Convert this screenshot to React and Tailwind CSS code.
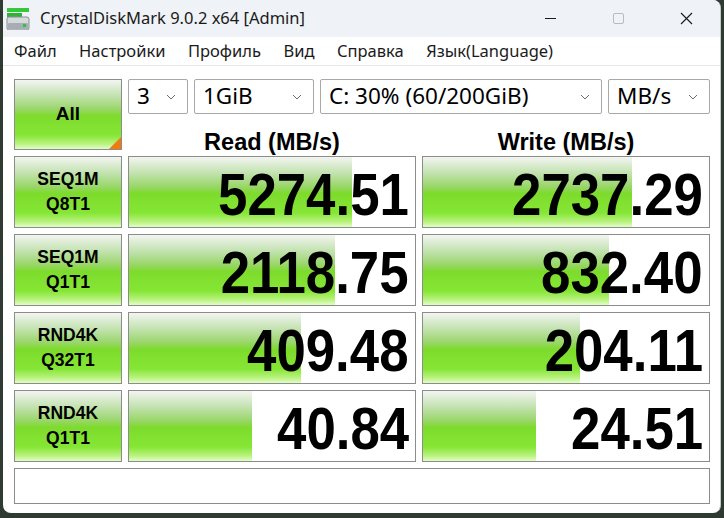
import React from 'react';

const rows = [
  { a: 'SEQ1M', b: 'Q8T1', read: '5274.51', readPct: 78, write: '2737.29', writePct: 73 },
  { a: 'SEQ1M', b: 'Q1T1', read: '2118.75', readPct: 72, write: '832.40', writePct: 65 },
  { a: 'RND4K', b: 'Q32T1', read: '409.48', readPct: 60, write: '204.11', writePct: 55 },
  { a: 'RND4K', b: 'Q1T1', read: '40.84', readPct: 43, write: '24.51', writePct: 39.5 },
];

const green =
  'bg-[linear-gradient(to_bottom,#f3f5f1_0%,#c4e3b2_22%,#9ad66a_42%,#7ddb2c_52%,#86e636_80%,#b7f27c_92%,#e2fcc8_100%)]';

const ui = { fontFamily: '"Noto Sans", "Open Sans", sans-serif' };
const bold = { fontFamily: '"Liberation Sans", Arial, sans-serif' };

const Chevron = () => (
  <svg width="12" height="8" viewBox="0 0 12 8" className="shrink-0">
    <path d="M2 2 L6 6 L10 2" fill="none" stroke="#6b6b6b" strokeWidth="1" />
  </svg>
);

const Select = ({ value, className }) => (
  <div
    className={`h-[35px] flex items-center justify-between pl-[8px] pr-[10px] bg-white border border-[#a8a8a8] rounded-[2px] ${className}`}
  >
    <span className="text-[22.5px] text-black leading-none" style={ui}>{value}</span>
    <Chevron />
  </div>
);

const ResultCell = ({ value, pct }) => (
  <div className="relative h-[72px] border border-[#8c8c8c] bg-white overflow-hidden">
    <div className={`h-full ${green}`} style={{ width: pct + '%' }} />
    <div className="absolute inset-0 flex items-center justify-end pr-[6px] pt-[6px]">
      <span
        className="text-[60px] font-bold text-black leading-none scale-x-[0.88] origin-right"
        style={bold}
      >
        {value}
      </span>
    </div>
  </div>
);

const DriveIcon = () => (
  <svg width="24" height="22" viewBox="0 0 24 22">
    <rect x="1" y="0" width="22" height="4" fill="#35c83a" />
    <rect x="1" y="5" width="15" height="4" fill="#2fb235" />
    <rect x="1" y="9" width="22" height="13" rx="2" fill="#d6d9dc" stroke="#8a9096" strokeWidth="1" />
    <rect x="2" y="15" width="20" height="6" rx="1" fill="#a6adb4" />
    <rect x="17" y="16" width="3" height="3" fill="#33c63a" />
  </svg>
);

export default function App() {
  return (
    <div className="w-[724px] h-[518px] bg-[#2f3a33] overflow-hidden">
      <div className="ml-[3px] w-[718px] h-[513px] rounded-b-[8px] rounded-tr-[8px] overflow-hidden bg-white flex flex-col border-r border-[#c9c9c9]">
        {/* title bar */}
        <div className="h-[37px] bg-[#eff2f6] flex items-center shrink-0">
          <div className="ml-[3px] mr-[10px]"><DriveIcon /></div>
          <span className="text-[16.5px] text-[#1a1a1a]" style={ui}>CrystalDiskMark 9.0.2 x64 [Admin]</span>
          <div className="ml-auto flex items-center h-full">
            <div className="w-[68px] flex justify-center">
              <div className="w-[11px] h-[1px] bg-[#1a1a1a]" />
            </div>
            <div className="w-[68px] flex justify-center">
              <div className="w-[11px] h-[11px] border border-[#b9bbbe] rounded-[2px]" />
            </div>
            <div className="w-[68px] flex justify-center">
              <svg width="13" height="13" viewBox="0 0 13 13">
                <path d="M1 1 L12 12 M12 1 L1 12" stroke="#1a1a1a" strokeWidth="1.1" />
              </svg>
            </div>
          </div>
        </div>

        {/* menu */}
        <div className="h-[29px] flex items-center gap-[22.5px] pl-[11px] text-[16.5px] text-[#1a1a1a] border-b border-[#e6e6e6] shrink-0" style={ui}>
          <span>Файл</span>
          <span>Настройки</span>
          <span>Профиль</span>
          <span>Вид</span>
          <span>Справка</span>
          <span>Язык(Language)</span>
        </div>

        {/* body */}
        <div className="pl-[11px] pt-[13px] flex flex-col gap-[6px]">
          <div className="flex gap-[6px]">
            <div className={`relative w-[108px] h-[71px] border border-[#8c8c8c] ${green} flex items-center justify-center`}>
              <span className="text-[19px] font-bold text-black" style={bold}>All</span>
              <div className="absolute right-0 bottom-0 w-0 h-0 border-l-[12px] border-l-transparent border-b-[12px] border-b-[#f07a10]" />
            </div>
            <div className="flex flex-col w-[582px]">
              <div className="flex gap-[6px]">
                <Select value="3" className="w-[60px]" />
                <Select value="1GiB" className="w-[120px]" />
                <Select value="C: 30% (60/200GiB)" className="w-[282px]" />
                <Select value="MB/s" className="w-[102px]" />
              </div>
              <div className="flex-1 flex gap-[6px] items-end">
                <div className="w-[288px] mb-[-4px] text-center text-[23.5px] font-bold text-black leading-none" style={bold}>Read (MB/s)</div>
                <div className="w-[288px] mb-[-4px] text-center text-[23.5px] font-bold text-black leading-none" style={bold}>Write (MB/s)</div>
              </div>
            </div>
          </div>

          {rows.map((r, i) => (
            <div key={i} className="grid grid-cols-[108px_288px_288px] gap-[6px]">
              <div className={`h-[72px] border border-[#8c8c8c] ${green} flex flex-col items-center justify-center gap-[8px]`}>
                <span className="text-[17.5px] font-bold text-black leading-none" style={bold}>{r.a}</span>
                <span className="text-[17.5px] font-bold text-black leading-none" style={bold}>{r.b}</span>
              </div>
              <ResultCell value={r.read} pct={r.readPct} />
              <ResultCell value={r.write} pct={r.writePct} />
            </div>
          ))}

          <div className="w-[696px] h-[36px] border border-[#8c8c8c] bg-white" />
        </div>
      </div>
    </div>
  );
}
